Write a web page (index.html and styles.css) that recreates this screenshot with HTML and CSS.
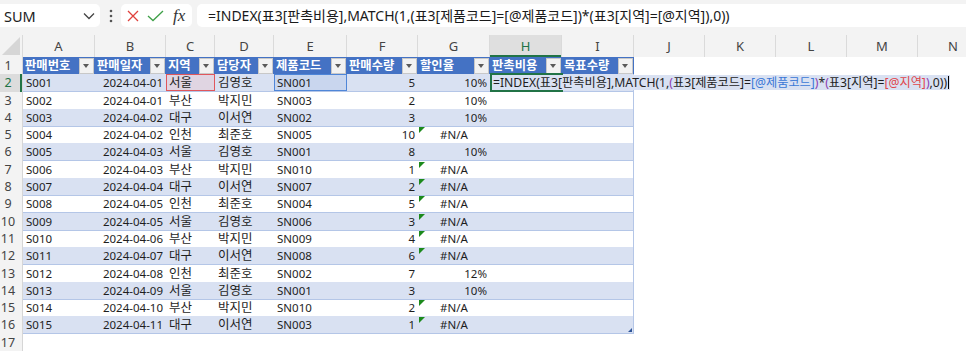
FILE: index.html
```html
<!DOCTYPE html>
<html lang="ko">
<head>
    <meta charset="UTF-8">
    <title>판매 데이터</title>
    <link rel="stylesheet" href="styles.css">
</head>
<body>
    <div class="topbar">
        <div class="namebox">
            <span>SUM</span>
            <svg width="12" height="8" viewBox="0 0 12 8"><path d="M1 1.5 L6 6.5 L11 1.5" fill="none" stroke="#444" stroke-width="1.3"/></svg>
        </div>
        <div class="dots">
            <svg width="4" height="14" viewBox="0 0 4 14"><circle cx="2" cy="2" r="1.3" fill="#555"/><circle cx="2" cy="7" r="1.3" fill="#555"/><circle cx="2" cy="12" r="1.3" fill="#555"/></svg>
        </div>
        <div class="fxbox">
            <svg width="12" height="12" viewBox="0 0 12 12"><path d="M1 1 L11 11 M11 1 L1 11" stroke="#e0413c" stroke-width="1.3" fill="none"/></svg>
            <svg width="17" height="12" viewBox="0 0 17 12"><path d="M1 6 L6 10.5 L16 1" stroke="#3fa048" stroke-width="1.3" fill="none"/></svg>
            <span class="fx">fx</span>
        </div>
        <div class="formula">=INDEX(표3[판촉비용],MATCH(1,(표3[제품코드]=[@제품코드])*(표3[지역]=[@지역]),0))</div>
    </div>

    <div class="colhead">
        <div class="corner"><svg width="18" height="18" viewBox="0 0 18 18"><path d="M18 0 L18 18 L0 18 Z" fill="#d6d6d6"/></svg></div>
        <div class="ch">A</div><div class="ch">B</div><div class="ch">C</div><div class="ch">D</div><div class="ch">E</div>
        <div class="ch">F</div><div class="ch">G</div><div class="ch on">H</div><div class="ch">I</div><div class="ch">J</div>
        <div class="ch">K</div><div class="ch">L</div><div class="ch">M</div><div class="ch">N</div>
    </div>

    <div class="sheet">
        <div class="row">
            <div class="rh">1</div>
            <div class="h">판매번호<span class="dd"></span></div>
            <div class="h">판매일자<span class="dd"></span></div>
            <div class="h">지역<span class="dd"></span></div>
            <div class="h">담당자<span class="dd"></span></div>
            <div class="h">제품코드<span class="dd"></span></div>
            <div class="h">판매수량<span class="dd"></span></div>
            <div class="h">할인율<span class="dd"></span></div>
            <div class="h">판촉비용<span class="dd"></span></div>
            <div class="h">목표수량<span class="dd"></span></div>
            <div class="e"></div><div class="e"></div><div class="e"></div><div class="e"></div><div class="e"></div>
        </div>
        <div class="row band">
            <div class="rh on">2</div>
            <div class="c">S001</div><div class="c r">2024-04-01</div><div class="c k ref-red">서울</div><div class="c k">김영호</div><div class="c ref-blue">SN001</div>
            <div class="c r">5</div><div class="c r">10%</div>
            <div class="c edit"><div class="editbox">=INDEX(표3[판촉비용],MATCH(1,<span class="pp">(</span>표3[제품코드]=<span class="rb">[@제품코드]</span><span class="pp">)</span>*<span class="pp">(</span>표3[지역]=<span class="rr">[@지역]</span><span class="pp">)</span>,0))<span class="caret"></span></div></div>
            <div class="c last"></div>
            <div class="e"></div><div class="e"></div><div class="e"></div><div class="e"></div><div class="e"></div>
        </div>
        <div class="row">
            <div class="rh">3</div>
            <div class="c">S002</div><div class="c r">2024-04-01</div><div class="c k">부산</div><div class="c k">박지민</div><div class="c">SN003</div>
            <div class="c r">2</div><div class="c r">10%</div><div class="c"></div><div class="c last"></div>
            <div class="e"></div><div class="e"></div><div class="e"></div><div class="e"></div><div class="e"></div>
        </div>
        <div class="row band">
            <div class="rh">4</div>
            <div class="c">S003</div><div class="c r">2024-04-02</div><div class="c k">대구</div><div class="c k">이서연</div><div class="c">SN002</div>
            <div class="c r">3</div><div class="c r">10%</div><div class="c"></div><div class="c last"></div>
            <div class="e"></div><div class="e"></div><div class="e"></div><div class="e"></div><div class="e"></div>
        </div>
        <div class="row">
            <div class="rh">5</div>
            <div class="c">S004</div><div class="c r">2024-04-02</div><div class="c k">인천</div><div class="c k">최준호</div><div class="c">SN005</div>
            <div class="c r">10</div><div class="c m err">#N/A</div><div class="c"></div><div class="c last"></div>
            <div class="e"></div><div class="e"></div><div class="e"></div><div class="e"></div><div class="e"></div>
        </div>
        <div class="row band">
            <div class="rh">6</div>
            <div class="c">S005</div><div class="c r">2024-04-03</div><div class="c k">서울</div><div class="c k">김영호</div><div class="c">SN001</div>
            <div class="c r">8</div><div class="c r">10%</div><div class="c"></div><div class="c last"></div>
            <div class="e"></div><div class="e"></div><div class="e"></div><div class="e"></div><div class="e"></div>
        </div>
        <div class="row">
            <div class="rh">7</div>
            <div class="c">S006</div><div class="c r">2024-04-03</div><div class="c k">부산</div><div class="c k">박지민</div><div class="c">SN010</div>
            <div class="c r">1</div><div class="c m err">#N/A</div><div class="c"></div><div class="c last"></div>
            <div class="e"></div><div class="e"></div><div class="e"></div><div class="e"></div><div class="e"></div>
        </div>
        <div class="row band">
            <div class="rh">8</div>
            <div class="c">S007</div><div class="c r">2024-04-04</div><div class="c k">대구</div><div class="c k">이서연</div><div class="c">SN007</div>
            <div class="c r">2</div><div class="c m err">#N/A</div><div class="c"></div><div class="c last"></div>
            <div class="e"></div><div class="e"></div><div class="e"></div><div class="e"></div><div class="e"></div>
        </div>
        <div class="row">
            <div class="rh">9</div>
            <div class="c">S008</div><div class="c r">2024-04-05</div><div class="c k">인천</div><div class="c k">최준호</div><div class="c">SN004</div>
            <div class="c r">5</div><div class="c m err">#N/A</div><div class="c"></div><div class="c last"></div>
            <div class="e"></div><div class="e"></div><div class="e"></div><div class="e"></div><div class="e"></div>
        </div>
        <div class="row band">
            <div class="rh">10</div>
            <div class="c">S009</div><div class="c r">2024-04-05</div><div class="c k">서울</div><div class="c k">김영호</div><div class="c">SN006</div>
            <div class="c r">3</div><div class="c m err">#N/A</div><div class="c"></div><div class="c last"></div>
            <div class="e"></div><div class="e"></div><div class="e"></div><div class="e"></div><div class="e"></div>
        </div>
        <div class="row">
            <div class="rh">11</div>
            <div class="c">S010</div><div class="c r">2024-04-06</div><div class="c k">부산</div><div class="c k">박지민</div><div class="c">SN009</div>
            <div class="c r">4</div><div class="c m err">#N/A</div><div class="c"></div><div class="c last"></div>
            <div class="e"></div><div class="e"></div><div class="e"></div><div class="e"></div><div class="e"></div>
        </div>
        <div class="row band">
            <div class="rh">12</div>
            <div class="c">S011</div><div class="c r">2024-04-07</div><div class="c k">대구</div><div class="c k">이서연</div><div class="c">SN008</div>
            <div class="c r">6</div><div class="c m err">#N/A</div><div class="c"></div><div class="c last"></div>
            <div class="e"></div><div class="e"></div><div class="e"></div><div class="e"></div><div class="e"></div>
        </div>
        <div class="row">
            <div class="rh">13</div>
            <div class="c">S012</div><div class="c r">2024-04-08</div><div class="c k">인천</div><div class="c k">최준호</div><div class="c">SN002</div>
            <div class="c r">7</div><div class="c r">12%</div><div class="c"></div><div class="c last"></div>
            <div class="e"></div><div class="e"></div><div class="e"></div><div class="e"></div><div class="e"></div>
        </div>
        <div class="row band">
            <div class="rh">14</div>
            <div class="c">S013</div><div class="c r">2024-04-09</div><div class="c k">서울</div><div class="c k">김영호</div><div class="c">SN001</div>
            <div class="c r">3</div><div class="c r">10%</div><div class="c"></div><div class="c last"></div>
            <div class="e"></div><div class="e"></div><div class="e"></div><div class="e"></div><div class="e"></div>
        </div>
        <div class="row">
            <div class="rh">15</div>
            <div class="c">S014</div><div class="c r">2024-04-10</div><div class="c k">부산</div><div class="c k">박지민</div><div class="c">SN010</div>
            <div class="c r">2</div><div class="c m err">#N/A</div><div class="c"></div><div class="c last"></div>
            <div class="e"></div><div class="e"></div><div class="e"></div><div class="e"></div><div class="e"></div>
        </div>
        <div class="row band">
            <div class="rh">16</div>
            <div class="c">S015</div><div class="c r">2024-04-11</div><div class="c k">대구</div><div class="c k">이서연</div><div class="c">SN003</div>
            <div class="c r">1</div><div class="c m err">#N/A</div><div class="c"></div><div class="c last resize"></div>
            <div class="e"></div><div class="e"></div><div class="e"></div><div class="e"></div><div class="e"></div>
        </div>
        <div class="row">
            <div class="rh">17</div>
            <div class="e"></div><div class="e"></div><div class="e"></div><div class="e"></div><div class="e"></div>
            <div class="e"></div><div class="e"></div><div class="e"></div><div class="e"></div><div class="e"></div>
            <div class="e"></div><div class="e"></div><div class="e"></div><div class="e"></div>
        </div>
    </div>
</body>
</html>
```

FILE: styles.css
```css
:root {
    --cols: 23px 72px 71px 49px 59px 73px 71px 72px 72px 72px 71px 71px 71px 71px 71px;
}
body {
    margin: 0;
    width: 966px;
    height: 352px;
    overflow: hidden;
    background: #fff;
    font-family: "Noto Sans", "Noto Sans CJK KR", sans-serif;
    color: #1e1e1e;
}

/* formula bar */
.topbar {
    display: flex;
    align-items: flex-start;
    height: 35px;
    padding-top: 4px;
    box-sizing: border-box;
    background: #f3f3f3;
}
.namebox {
    width: 100px;
    height: 23px;
    box-sizing: border-box;
    padding: 0 5px 0 4px;
    display: flex;
    align-items: center;
    justify-content: space-between;
    background: #fff;
    border-radius: 0 5px 5px 0;
    font-size: 14.5px;
    color: #222;
}
.dots {
    width: 21px;
    height: 23px;
    display: flex;
    align-items: center;
    justify-content: center;
}
.fxbox {
    width: 71px;
    height: 23px;
    box-sizing: border-box;
    padding-left: 6px;
    display: flex;
    align-items: center;
    gap: 8px;
    background: #fff;
    border-radius: 5px;
}
.fx {
    font-family: "Liberation Serif", serif;
    font-style: italic;
    font-size: 17px;
    color: #333;
    margin-left: 1px;
}
.formula {
    flex: 1;
    height: 23px;
    margin-left: 5px;
    padding-left: 11px;
    background: #fff;
    border-radius: 5px 0 0 5px;
    font-size: 14px;
    line-height: 23px;
    white-space: nowrap;
    color: #1a1a1a;
}

/* column letters */
.colhead {
    display: grid;
    grid-template-columns: var(--cols);
    height: 22px;
    background: #f3f3f3;
}
.corner {
    display: flex;
    align-items: flex-end;
    justify-content: flex-end;
    padding: 0 2px 2px 0;
    border-right: 1px solid #dadada;
}
.ch {
    text-align: center;
    font-size: 13px;
    line-height: 22px;
    color: #444;
    border-right: 1px solid #dadada;
}
.ch.on {
    background: #dfdfdf;
    color: #217346;
    box-shadow: inset 0 -2px #217346;
}

/* grid */
.row {
    display: grid;
    grid-template-columns: var(--cols);
    height: 17.3px;
    font-size: 11.5px;
    line-height: 17px;
}
.rh {
    background: #f3f3f3;
    color: #444;
    font-size: 12.5px;
    text-align: center;
    padding-right: 6px;
    border-right: 1px solid #d6d6d6;
}
.rh.on {
    background: #dcdcdc;
    color: #217346;
    box-shadow: inset -2px 0 #217346;
}
.h {
    display: flex;
    align-items: center;
    justify-content: space-between;
    padding-left: 2px;
    background: #4472c4;
    color: #fff;
    font-weight: 700;
    font-size: 12.3px;
    white-space: nowrap;
}
.dd {
    position: relative;
    flex: none;
    width: 13px;
    height: 14px;
    margin-right: 1px;
    background: #f2f2f2;
    border: 1px solid #c8c8c8;
}
.dd::after {
    content: "";
    position: absolute;
    left: 3px;
    top: 5px;
    border-top: 4px solid #5a5a5a;
    border-left: 3.5px solid transparent;
    border-right: 3.5px solid transparent;
}
.c {
    position: relative;
    padding: 0 3px;
    border-bottom: 1px solid #b4c6e7;
    white-space: nowrap;
}
.c.k {
    font-size: 12.5px;
}
.band .c {
    background: #d9e1f2;
}
.c.r {
    text-align: right;
}
.c.m {
    text-align: center;
}
.c.last {
    border-right: 1px solid #b4c6e7;
}
.c.err::before {
    content: "";
    position: absolute;
    left: 1px;
    top: 1px;
    border-top: 6px solid #1c8a1c;
    border-right: 6px solid transparent;
}
.c.resize::after {
    content: "";
    position: absolute;
    right: 1px;
    bottom: 1px;
    border-bottom: 4px solid #2f5597;
    border-left: 4px solid transparent;
}

/* references highlighted while editing */
.band .c.ref-red {
    background: #e0d5e2;
    box-shadow: inset 0 0 0 1px #e0575c;
}
.band .c.ref-blue {
    background: #c9d6ee;
    box-shadow: inset 0 0 0 1px #4f86d8;
}
.c.edit {
    padding: 0;
}
.c.edit::after {
    content: "";
    position: absolute;
    left: 0;
    top: -1px;
    width: 73px;
    height: 19px;
    box-sizing: border-box;
    border: 2px solid #217346;
    border-right: none;
    z-index: 2;
}
.editbox {
    position: absolute;
    left: 2px;
    top: 1px;
    bottom: 1px;
    padding: 0 1px;
    background: #d9e1f2;
    font-size: 12.2px;
    line-height: 15px;
    white-space: nowrap;
    z-index: 1;
}
.pp { color: #8c3fb3; }
.rb { color: #3b78d6; }
.rr { color: #e0474c; }
.caret {
    display: inline-block;
    width: 1px;
    height: 13px;
    margin-left: 1px;
    vertical-align: -2px;
    background: #000;
}
```
